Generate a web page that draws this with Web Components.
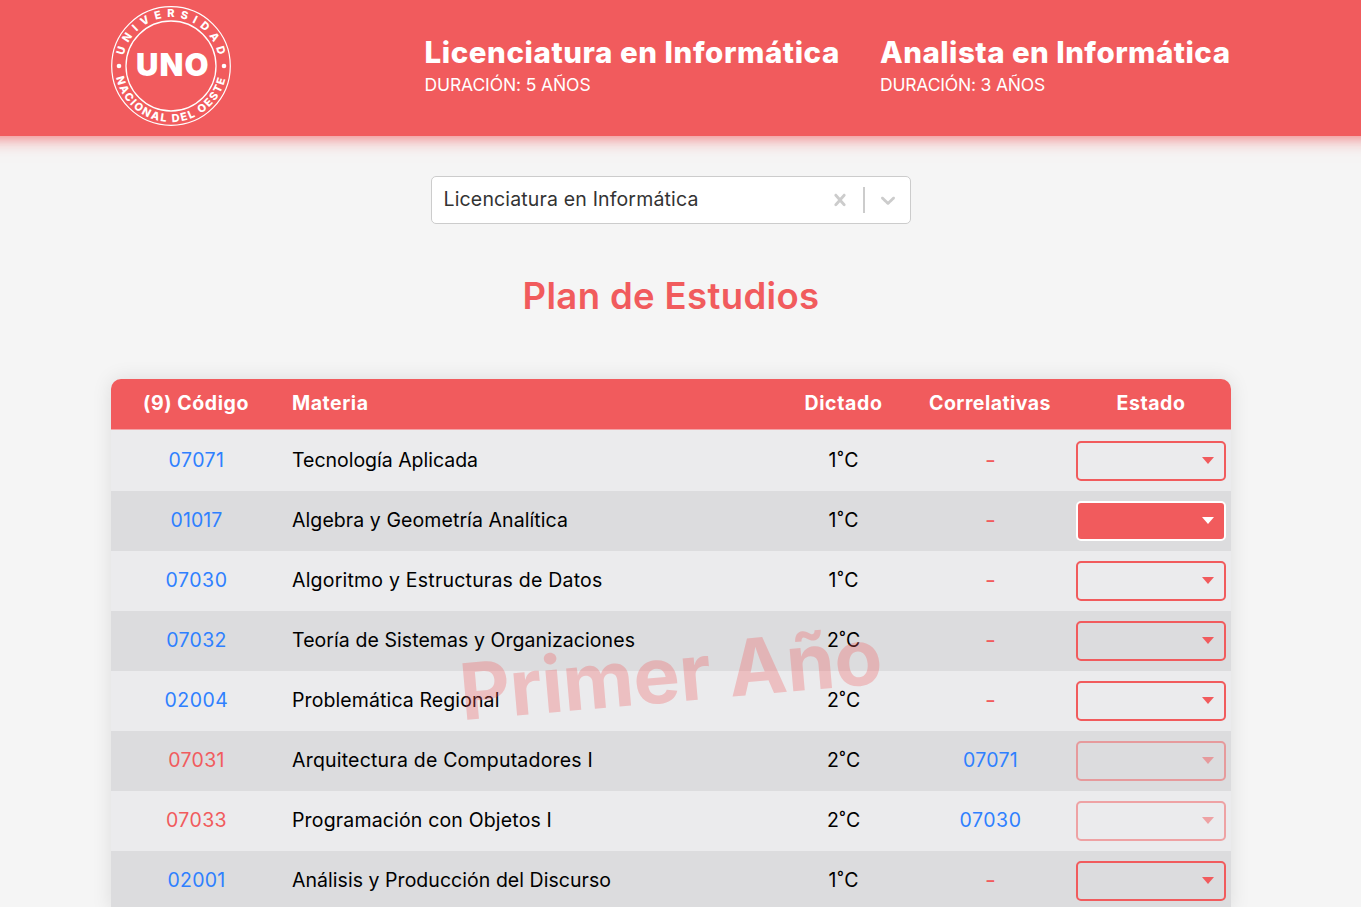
<!DOCTYPE html>
<html lang="es">
<head>
<meta charset="utf-8">
<title>Plan de Estudios</title>
<style>
html,body{margin:0;height:907px;overflow:hidden;background:#f5f5f5}
body{font-family:Inter,"Open Sans",sans-serif;--red:#f15b5d;--blue:#2f80ff;color:#000}
</style>
</head>
<body>
<plan-app></plan-app>
<script>
// Text set to a given line width by distributing the tracking.
class FitText extends HTMLElement{
  connectedCallback(){
    if(!this.shadowRoot){
      this.attachShadow({mode:'open'}).innerHTML='<style>:host{display:inline-block;white-space:nowrap}</style><slot></slot>';
    }
    const w=parseFloat(this.getAttribute('w')),n=this.textContent.length;
    this.style.letterSpacing='0';
    const s=this.getBoundingClientRect().width;
    this.style.letterSpacing=((w-s)/n).toFixed(3)+'px';
  }
}

class UnoLogo extends HTMLElement{
  connectedCallback(){
    this.attachShadow({mode:'open'}).innerHTML=`<style>:host{display:block;width:120px;height:120px}svg{display:block}</style>
<svg width="120" height="120" viewBox="0 0 120 120" fill="#fff" font-family="Inter,sans-serif">
<circle cx="60" cy="60" r="59.3" fill="none" stroke="#fff" stroke-width="1.2"/>
<circle cx="60" cy="60" r="45" fill="none" stroke="#fff" stroke-width="1.3"/>
<circle cx="8" cy="60" r="2.3"/><circle cx="113" cy="60" r="2.3"/>
<path id="t" fill="none" d="M12.6 49.6A48.5 48.5 0 0 1 107.4 49.6"/>
<path id="b" fill="none" d="M5.2 71.6A56 56 0 0 0 114.8 71.6"/>
<text font-size="11" font-weight="800"><textPath href="#t" textLength="131">UNIVERSIDAD</textPath></text>
<text font-size="11" font-weight="800"><textPath href="#b" textLength="151">NACIONAL DEL OESTE</textPath></text>
<text x="25" y="69.8" font-size="31" font-weight="900" textLength="72.5">UNO</text>
</svg>`;
  }
}

class CareerInfo extends HTMLElement{
  connectedCallback(){
    const a=n=>this.getAttribute(n);
    this.attachShadow({mode:'open'}).innerHTML=`<style>
:host{display:block;color:#fff}
h2{margin:0;font-size:29.5px;line-height:38px;font-weight:800}
p{margin:0;font-size:17.5px;line-height:27px;font-weight:400}
h2 fit-text,p fit-text{display:block;width:max-content}
</style><h2><fit-text w="${a('nw')}">${a('name')}</fit-text></h2><p><fit-text w="${a('dw')}">${a('duration')}</fit-text></p>`;
  }
}

class AppHeader extends HTMLElement{
  connectedCallback(){
    this.attachShadow({mode:'open'}).innerHTML=`<style>
:host{display:flex;box-sizing:border-box;height:136px;margin:0 -30px;padding:6px 161px 0 141px;background:var(--red);box-shadow:0 0 18px var(--red)}
.c{display:flex;margin-left:193.5px;padding-top:27px;gap:40px}
.c>:first-child{width:415.5px}
</style><uno-logo></uno-logo><div class="c">
<career-info name="Licenciatura en Informática" nw="415.5" duration="DURACIÓN: 5 AÑOS" dw="166"></career-info>
<career-info name="Analista en Informática" nw="350.5" duration="DURACIÓN: 3 AÑOS" dw="165"></career-info></div>`;
  }
}

class CareerSelect extends HTMLElement{
  connectedCallback(){
    this.attachShadow({mode:'open'}).innerHTML=`<style>
:host{display:flex;align-items:center;box-sizing:border-box;width:480px;height:48px;background:#fff;border:1px solid #ccc;border-radius:5px;padding-left:11.5px;color:#333;font-size:19.5px}
.t{flex:1;padding-bottom:2px}
svg{display:block;fill:#ccc}
i{width:2px;height:26px;background:#ccc;margin:0 11px 0 11px}
.d{margin-right:10px}
</style><div class="t"><slot></slot></div>
<svg width="24" height="24" viewBox="0 0 20 20"><path d="M14.348 14.849c-0.469 0.469-1.229 0.469-1.697 0l-2.651-3.030-2.651 3.029c-0.469 0.469-1.229 0.469-1.697 0-0.469-0.469-0.469-1.229 0-1.697l2.758-3.15-2.759-3.152c-0.469-0.469-0.469-1.228 0-1.697s1.228-0.469 1.697 0l2.652 3.031 2.651-3.031c0.469-0.469 1.228-0.469 1.697 0s0.469 1.229 0 1.697l-2.758 3.152 2.758 3.15c0.469 0.469 0.469 1.229 0 1.698z"/></svg>
<i></i><svg class="d" width="24" height="24" viewBox="0 0 20 20"><path d="M4.516 7.548c0.436-0.446 1.043-0.481 1.576 0l3.908 3.747 3.908-3.747c0.533-0.481 1.141-0.446 1.574 0 0.436 0.445 0.408 1.197 0 1.615-0.406 0.418-4.695 4.502-4.695 4.502-0.217 0.223-0.502 0.335-0.787 0.335s-0.57-0.112-0.789-0.335c0 0-4.287-4.084-4.695-4.502s-0.436-1.17 0-1.615z"/></svg>`;
  }
}

class StateBox extends HTMLElement{
  connectedCallback(){
    this.attachShadow({mode:'open'}).innerHTML=`<style>
:host{display:flex;align-items:center;justify-content:flex-end;box-sizing:border-box;width:150px;height:40px;border:2px solid var(--red);border-radius:5px;color:var(--red);padding:0 10px 1px 0}
:host([kind=filled]){background:var(--red);border-color:#fff;color:#fff}
:host([kind=off]){opacity:.5}
svg{display:block;fill:currentColor}
</style><svg width="12" height="7" viewBox="0 0 12 7"><path d="M0 0H12L6 7Z"/></svg>`;
  }
}

class SubjectRow extends HTMLElement{
  connectedCallback(){
    const a=n=>this.getAttribute(n);
    const corr=a('corr')?`<fit-text class="blue" w="${a('xw')}">${a('corr')}</fit-text>`:'<span class="dash">-</span>';
    this.attachShadow({mode:'open'}).innerHTML=`<style>
:host{display:grid;grid-template-columns:var(--cols);height:60px;align-items:center;background:#ebebed;font-size:19.5px;line-height:26px}
:host(:nth-of-type(even)){background:#dcdcde}
div{text-align:center;padding:0 0 2px 1px}
div:first-child{padding-left:2px}
.m{text-align:left;padding-left:11px}
.code,.blue{color:var(--blue)}
:host([locked]) .code{color:var(--red)}
.dash{display:inline-block;color:var(--red);font-weight:500;transform:scaleX(1.2)}
.e{padding:0 0 1px 5px;height:40px}
</style><div><fit-text class="code" w="${a('cw')}">${a('code')}</fit-text></div>
<div class="m"><fit-text w="${a('mw')}">${a('name')}</fit-text></div>
<div><fit-text w="${a('term')=='1'?31:34}">${a('term')}˚C</fit-text></div>
<div>${corr}</div><div class="e"><state-box kind="${a('state')||''}"></state-box></div>`;
  }
}

class PlanTable extends HTMLElement{
  connectedCallback(){
    const rows=[
      ['07071',56,'Tecnología Aplicada',186,1],
      ['01017',52,'Algebra y Geometría Analítica',276,1,'filled'],
      ['07030',62,'Algoritmo y Estructuras de Datos',310.5,1],
      ['07032',60.5,'Teoría de Sistemas y Organizaciones',343,2],
      ['02004',64,'Problemática Regional',207.5,2],
      ['07031',56.5,'Arquitectura de Computadores I',301,2,'off','07071',55],
      ['07033',61,'Programación con Objetos I',260,2,'off','07030',62],
      ['02001',58,'Análisis y Producción del Discurso',319,1]];
    this.attachShadow({mode:'open'}).innerHTML=`<style>
:host{display:block;position:relative;width:1120px;border-radius:10px 10px 0 0;background:#ebebed;box-shadow:0 0 20px rgba(0,0,0,.1);--cols:170px 497px 131px 162px 160px}
.h{display:grid;grid-template-columns:var(--cols);box-sizing:border-box;height:51px;margin-bottom:1px;border-bottom:1px solid #f3a4a7;border-radius:10px 10px 0 0;background:var(--red);color:#fff;font-weight:700;font-size:19.5px;line-height:49px;text-align:center}
.h .m{text-align:left;padding-left:11px}
.w{position:absolute;left:348px;top:247px;font-size:78px;line-height:96px;font-weight:700;color:var(--red);opacity:.3;transform:rotate(-5deg);pointer-events:none}
</style><div class="h"><div><fit-text w="106">(9) Código</fit-text></div><div class="m"><fit-text w="76.5">Materia</fit-text></div><div><fit-text w="78">Dictado</fit-text></div><div><fit-text w="122">Correlativas</fit-text></div><div><fit-text w="69">Estado</fit-text></div></div>
${rows.map(r=>`<subject-row code="${r[0]}" cw="${r[1]}" name="${r[2]}" mw="${r[3]}" term="${r[4]}" state="${r[5]||''}" ${r[6]?`locked corr="${r[6]}" xw="${r[7]}"`:''}></subject-row>`).join('')}
<div class="w"><fit-text w="430">Primer Año</fit-text></div>`;
  }
}

class PlanApp extends HTMLElement{
  connectedCallback(){
    this.attachShadow({mode:'open'}).innerHTML=`<style>
:host{display:block;height:907px;overflow:hidden}
main{display:flex;flex-direction:column;align-items:center;padding:40px 19px 0 0}
h1{margin:48px 0 0;height:107px;font-size:36.5px;line-height:48px;font-weight:600;color:var(--red)}
</style><app-header></app-header><main><career-select><fit-text w="255">Licenciatura en Informática</fit-text></career-select>
<h1><fit-text w="297">Plan de Estudios</fit-text></h1><plan-table></plan-table></main>`;
  }
}
for(const [n,c] of [['uno-logo',UnoLogo],['state-box',StateBox],['career-info',CareerInfo],['app-header',AppHeader],['career-select',CareerSelect],['subject-row',SubjectRow],['plan-table',PlanTable],['plan-app',PlanApp],['fit-text',FitText]])customElements.define(n,c);
</script>
</body>
</html>
